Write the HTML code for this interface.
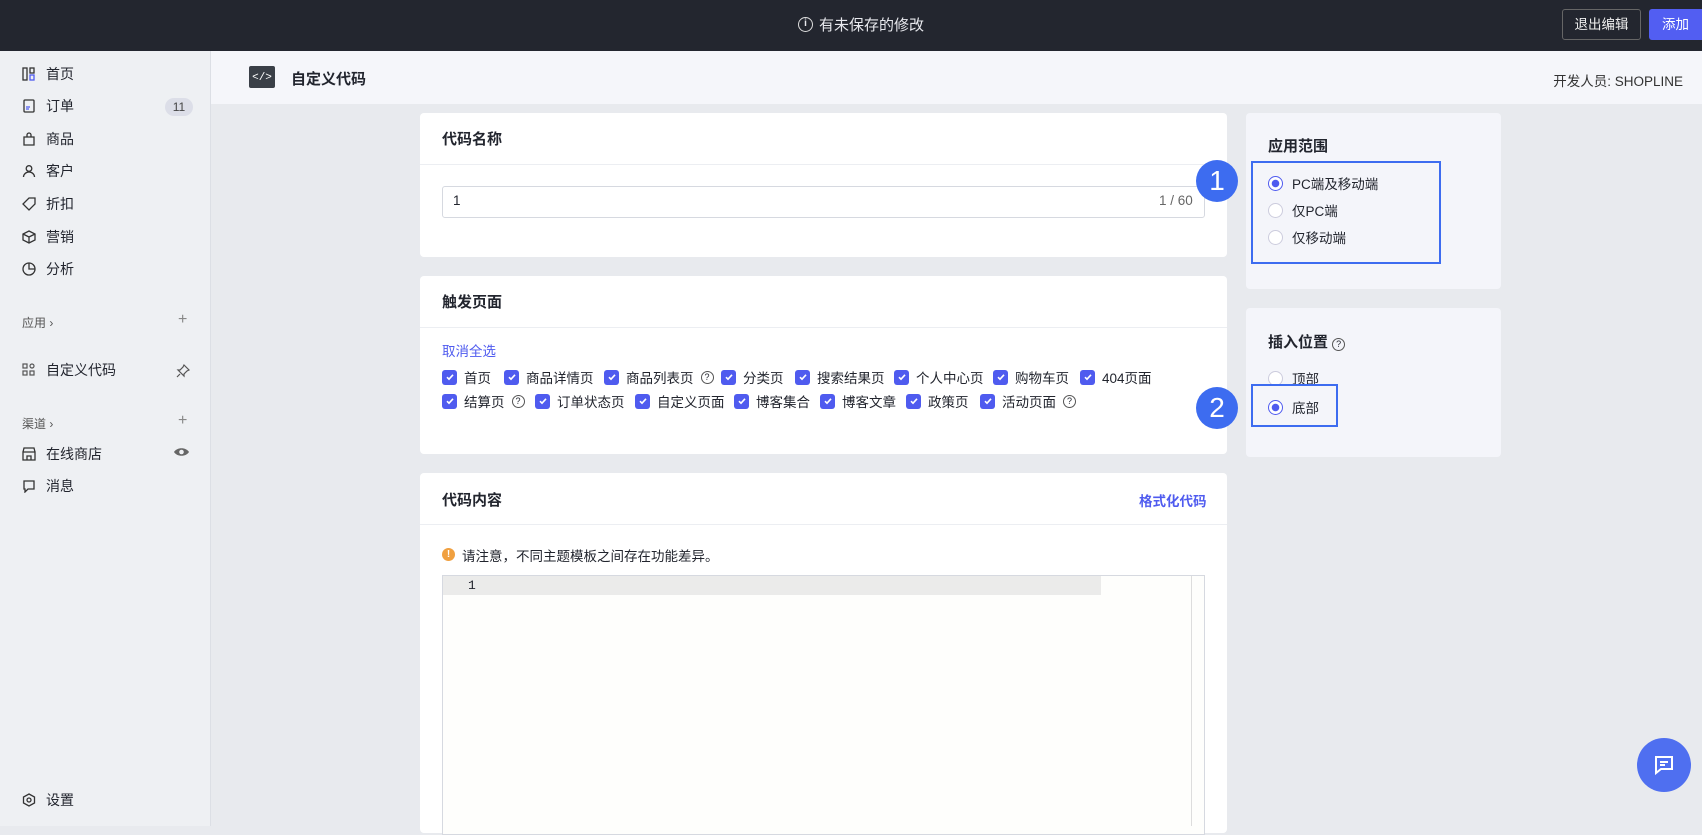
<!DOCTYPE html>
<html><head><meta charset="utf-8"><style>
*{box-sizing:border-box;margin:0;padding:0}
body{width:1702px;height:826px;overflow:hidden;background:#e8eaee;font-family:"Liberation Sans","Noto Sans CJK SC",sans-serif;font-size:14px;color:#22252e;position:relative}
.a{position:absolute}
.top{left:0;top:0;width:1702px;height:51px;background:#23262f}
.side{left:0;top:51px;width:211px;height:775px;background:#eef0f3;border-right:1px solid #dcdfe5}
.nav{position:absolute;left:22px;font-size:14px;line-height:20px;display:flex;align-items:center;gap:10px;color:#22252e}
.nav svg{width:14px;height:14px}
.hdr{left:211px;top:51px;width:1491px;height:53px;background:#f5f6fa}
.card{background:#fff;border-radius:4px}
.rcard{background:#f4f5fa;border-radius:4px}
.t{font-size:15px;font-weight:bold}
.cb{position:absolute;display:flex;align-items:center;gap:7px;font-size:13.5px;white-space:nowrap}
.cb i{width:15px;height:15px;background:#4f5bef;border-radius:3px;display:inline-flex;align-items:center;justify-content:center}
.q{display:inline-block;width:13px;height:13px;border:1px solid #555;border-radius:50%;font-size:9px;line-height:11px;text-align:center;font-style:normal}
.rad{position:absolute;display:flex;align-items:center;gap:9px;font-size:13.5px}
.rad b{width:15px;height:15px;border:1px solid #ccd;border-radius:50%;background:#fff;display:inline-block}
.rad b.on{border:1.5px solid #4f5bef;background:radial-gradient(#4f5bef 0 3.5px,#fff 4px)}
.num{position:absolute;width:42px;height:42px;border-radius:50%;background:#3d6cf0;color:#fff;font-size:28px;text-align:center;line-height:42px}
</style></head><body>
<div class="a top"></div>
<div class="a" style="left:798px;top:14px;color:#e8e9ee;font-size:15px;display:flex;align-items:center;gap:6px"><span style="width:15px;height:15px;border:1.5px solid #ddd;border-radius:50%;font-size:10px;line-height:12px;text-align:center;font-weight:bold">i</span>有未保存的修改</div>
<div class="a" style="left:1562px;top:9px;width:79px;height:31px;border:1px solid #666;border-radius:3px;color:#eee;font-size:13.5px;text-align:center;line-height:29px">退出编辑</div>
<div class="a" style="left:1649px;top:9px;width:60px;height:31px;background:#525ef2;border-radius:3px;color:#fff;font-size:13.5px;line-height:31px;padding-left:13px">添加</div>

<div class="a side"></div>
<div class="nav" style="top:64px"><svg viewBox="0 0 14 14" fill="none" stroke="#333" stroke-width="1.3"><rect x="1" y="1" width="4" height="12"/><rect x="8" y="1" width="4" height="5"/><rect x="8" y="8" width="4" height="5" stroke="#4f5bef"/></svg>首页</div>
<div class="nav" style="top:96px"><svg viewBox="0 0 14 14" fill="none" stroke="#333" stroke-width="1.3"><rect x="2" y="1" width="10" height="12" rx="1"/><path d="M4 8h4M4 10h3" stroke="#4f5bef"/></svg>订单</div>
<div class="a" style="left:165px;top:98px;width:28px;height:18px;border-radius:9px;background:#dcdee8;font-size:12px;text-align:center;line-height:18px;color:#444">11</div>
<div class="nav" style="top:129px"><svg viewBox="0 0 14 14" fill="none" stroke="#333" stroke-width="1.3"><path d="M2 5h10v8H2zM5 5V3a2 2 0 0 1 4 0v2"/></svg>商品</div>
<div class="nav" style="top:161px"><svg viewBox="0 0 14 14" fill="none" stroke="#333" stroke-width="1.3"><circle cx="7" cy="4.5" r="2.8"/><path d="M1.5 13a5.5 5 0 0 1 11 0"/></svg>客户</div>
<div class="nav" style="top:194px"><svg viewBox="0 0 14 14" fill="none" stroke="#333" stroke-width="1.3"><path d="M7 1h6v6l-6 6-6-6z"/></svg>折扣</div>
<div class="nav" style="top:227px"><svg viewBox="0 0 14 14" fill="none" stroke="#333" stroke-width="1.3"><path d="M7 1l6 3v6l-6 3-6-3V4zM1 4l6 3 6-3M7 7v6"/></svg>营销</div>
<div class="nav" style="top:259px"><svg viewBox="0 0 14 14" fill="none" stroke="#333" stroke-width="1.3"><circle cx="7" cy="7" r="6"/><path d="M7 1v6h6"/></svg>分析</div>
<div class="a" style="left:22px;top:314px;font-size:12px;color:#555">应用 ›</div>
<div class="a" style="left:178px;top:311px;font-size:16px;color:#888">+</div>
<div class="nav" style="top:360px"><svg viewBox="0 0 14 14" fill="none" stroke="#555" stroke-width="1.2"><rect x="1" y="1" width="4" height="4"/><rect x="1" y="8" width="4" height="4"/><rect x="8" y="8" width="4" height="4"/><circle cx="10" cy="3" r="2"/></svg>自定义代码</div>
<svg class="a" style="left:176px;top:364px" width="14" height="14" viewBox="0 0 14 14" fill="none" stroke="#555" stroke-width="1.2"><path d="M8 1l5 5-2 1-3 3 0 2-6-6 2 0 3-3zM4 10l-3 3"/></svg>
<div class="a" style="left:22px;top:415px;font-size:12px;color:#555">渠道 ›</div>
<div class="a" style="left:178px;top:412px;font-size:16px;color:#888">+</div>
<div class="nav" style="top:444px"><svg viewBox="0 0 14 14" fill="none" stroke="#333" stroke-width="1.3"><path d="M1 5h12v8H1zM1 5l1-4h10l1 4M5 13V9h4v4"/></svg>在线商店</div>
<svg class="a" style="left:173px;top:446px" width="17" height="12" viewBox="0 0 17 12"><path d="M1 6C4 1 13 1 16 6C13 11 4 11 1 6z" fill="#666"/><circle cx="8.5" cy="6" r="2.3" fill="#eef0f3"/></svg>
<div class="nav" style="top:476px"><svg viewBox="0 0 14 14" fill="none" stroke="#333" stroke-width="1.3"><path d="M2 2h10v8H6l-3 3v-3H2z"/></svg>消息</div>
<div class="nav" style="top:790px"><svg viewBox="0 0 14 14" fill="none" stroke="#333" stroke-width="1.3"><path d="M7 1l5.5 3v6L7 13 1.5 10V4z"/><circle cx="7" cy="7" r="2"/></svg>设置</div>

<div class="a hdr"></div>
<div class="a" style="left:249px;top:66px;width:26px;height:22px;background:#3a3f47;border-radius:2px;color:#fff;font-size:11px;text-align:center;line-height:24px;font-family:'Liberation Mono',monospace">&lt;/&gt;</div>
<div class="a" style="left:291px;top:68px;font-size:15px;font-weight:bold">自定义代码</div>
<div class="a" style="right:19px;top:70px;font-size:13.5px;color:#333">开发人员: SHOPLINE</div>

<div class="a card" style="left:420px;top:113px;width:807px;height:144px"></div>
<div class="a t" style="left:442px;top:128px">代码名称</div>
<div class="a" style="left:420px;top:164px;width:807px;height:1px;background:#eceef2"></div>
<div class="a" style="left:442px;top:186px;width:763px;height:32px;border:1px solid #d6d9e0;border-radius:3px"></div>
<div class="a" style="left:453px;top:193px;font-size:13.5px">1</div>
<div class="a" style="left:1159px;top:193px;font-size:13.5px;color:#666">1 / 60</div>

<div class="a card" style="left:420px;top:276px;width:807px;height:178px"></div>
<div class="a t" style="left:442px;top:291px">触发页面</div>
<div class="a" style="left:420px;top:327px;width:807px;height:1px;background:#eceef2"></div>
<div class="a" style="left:442px;top:340px;color:#4f5bef;font-size:13.5px">取消全选</div>
<svg width="0" height="0" style="position:absolute"><defs><symbol id="ck" viewBox="0 0 10 10"><path d="M2 5.2l2 2 4-4.4" stroke="#fff" stroke-width="1.6" fill="none"/></symbol></defs></svg>
<div class="cb" style="left:442px;top:367px"><i><svg width="10" height="10"><use href="#ck"/></svg></i>首页</div>
<div class="cb" style="left:504px;top:367px"><i><svg width="10" height="10"><use href="#ck"/></svg></i>商品详情页</div>
<div class="cb" style="left:604px;top:367px"><i><svg width="10" height="10"><use href="#ck"/></svg></i>商品列表页 <span class="q">?</span></div>
<div class="cb" style="left:721px;top:367px"><i><svg width="10" height="10"><use href="#ck"/></svg></i>分类页</div>
<div class="cb" style="left:795px;top:367px"><i><svg width="10" height="10"><use href="#ck"/></svg></i>搜索结果页</div>
<div class="cb" style="left:894px;top:367px"><i><svg width="10" height="10"><use href="#ck"/></svg></i>个人中心页</div>
<div class="cb" style="left:993px;top:367px"><i><svg width="10" height="10"><use href="#ck"/></svg></i>购物车页</div>
<div class="cb" style="left:1080px;top:367px"><i><svg width="10" height="10"><use href="#ck"/></svg></i>404页面</div>
<div class="cb" style="left:442px;top:391px"><i><svg width="10" height="10"><use href="#ck"/></svg></i>结算页 <span class="q">?</span></div>
<div class="cb" style="left:535px;top:391px"><i><svg width="10" height="10"><use href="#ck"/></svg></i>订单状态页</div>
<div class="cb" style="left:635px;top:391px"><i><svg width="10" height="10"><use href="#ck"/></svg></i>自定义页面</div>
<div class="cb" style="left:734px;top:391px"><i><svg width="10" height="10"><use href="#ck"/></svg></i>博客集合</div>
<div class="cb" style="left:820px;top:391px"><i><svg width="10" height="10"><use href="#ck"/></svg></i>博客文章</div>
<div class="cb" style="left:906px;top:391px"><i><svg width="10" height="10"><use href="#ck"/></svg></i>政策页</div>
<div class="cb" style="left:980px;top:391px"><i><svg width="10" height="10"><use href="#ck"/></svg></i>活动页面 <span class="q">?</span></div>

<div class="a card" style="left:420px;top:473px;width:807px;height:360px"></div>
<div class="a t" style="left:442px;top:489px">代码内容</div>
<div class="a" style="left:1139px;top:490px;color:#4f5bef;font-size:13.5px;font-weight:bold">格式化代码</div>
<div class="a" style="left:420px;top:524px;width:807px;height:1px;background:#eceef2"></div>
<div class="a" style="left:442px;top:548px;width:13px;height:13px;border-radius:50%;background:#f0a040;color:#fff;font-size:10px;text-align:center;line-height:13px;font-weight:bold">!</div>
<div class="a" style="left:462px;top:545px;font-size:13.5px">请注意，不同主题模板之间存在功能差异。</div>
<div class="a" style="left:442px;top:575px;width:763px;height:260px;border:1px solid #d6d9e0;background:#fefefc"></div>
<div class="a" style="left:443px;top:576px;width:658px;height:19px;background:#ebebea"></div>
<div class="a" style="left:468px;top:578px;font-size:13px;font-family:'Liberation Mono',monospace">1</div>
<div class="a" style="left:1191px;top:576px;width:1px;height:250px;background:#ddd"></div>

<div class="a rcard" style="left:1246px;top:113px;width:255px;height:176px"></div>
<div class="a t" style="left:1268px;top:135px">应用范围</div>
<div class="a" style="left:1251px;top:161px;width:190px;height:103px;border:2px solid #3d6cf0"></div>
<div class="rad" style="left:1268px;top:173px"><b class="on"></b>PC端及移动端</div>
<div class="rad" style="left:1268px;top:200px"><b></b>仅PC端</div>
<div class="rad" style="left:1268px;top:227px"><b></b>仅移动端</div>
<div class="num" style="left:1196px;top:160px">1</div>

<div class="a rcard" style="left:1246px;top:308px;width:255px;height:149px"></div>
<div class="a t" style="left:1268px;top:331px">插入位置 <span class="q" style="font-weight:normal">?</span></div>
<div class="rad" style="left:1268px;top:368px"><b></b>顶部</div>
<div class="a" style="left:1251px;top:384px;width:87px;height:43px;border:2px solid #3d6cf0"></div>
<div class="rad" style="left:1268px;top:397px"><b class="on"></b>底部</div>
<div class="num" style="left:1196px;top:387px">2</div>

<div class="a" style="left:1637px;top:738px;width:54px;height:54px;border-radius:50%;background:#4f6ff0;display:flex;align-items:center;justify-content:center"><svg width="24" height="24" viewBox="0 0 24 24" fill="none" stroke="#fff" stroke-width="2"><path d="M4 4h16v12H9l-5 4z"/><path d="M8 9h8M8 12h5"/></svg></div>
</body></html>
